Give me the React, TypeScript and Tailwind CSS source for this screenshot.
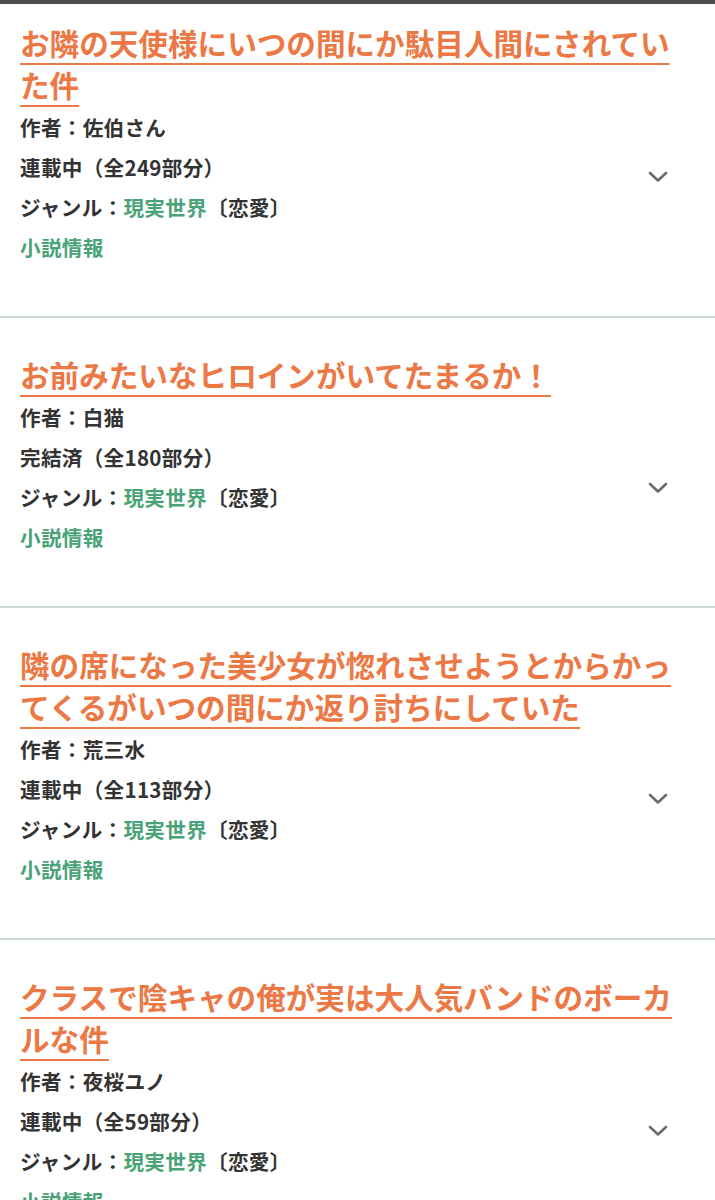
import React from 'react';

interface Novel {
  title: string;
  author: string;
  status: string;
}

const novels: Novel[] = [
  { title: 'お隣の天使様にいつの間にか駄目人間にされていた件', author: '佐伯さん', status: '連載中（全249部分）' },
  { title: 'お前みたいなヒロインがいてたまるか！', author: '白猫', status: '完結済（全180部分）' },
  { title: '隣の席になった美少女が惚れさせようとからかってくるがいつの間にか返り討ちにしていた', author: '荒三水', status: '連載中（全113部分）' },
  { title: 'クラスで陰キャの俺が実は大人気バンドのボーカルな件', author: '夜桜ユノ', status: '連載中（全59部分）' },
];

const Chevron = () => (
  <svg width="20" height="12" viewBox="0 0 20 12" fill="none">
    <polyline points="2,2 10,9.5 18,2" stroke="#6b6b6b" strokeWidth="2.6" strokeLinecap="round" strokeLinejoin="round" />
  </svg>
);

const NovelItem: React.FC<{ novel: Novel; first?: boolean }> = ({ novel, first }) => (
  <div className={`flex items-center pl-5 pb-[49px] ${first ? 'pt-[18px]' : 'pt-[36px] border-t-2 border-[#cbd8d8]'}`}>
    <div className="w-[675px] shrink-0">
      <a className="block text-[29.6px] leading-[42px] font-bold text-[#eb7845] underline decoration-2 underline-offset-[8px] pb-px">
        {novel.title}
      </a>
      <div className="text-[20.6px] leading-[40px] font-semibold text-[#333] tracking-[0.3px]">
        <p>作者：{novel.author}</p>
        <p>{novel.status}</p>
        <p>
          ジャンル：<span className="text-[#4aa378]">現実世界</span>〔恋愛〕
        </p>
        <p className="text-[#4aa378]">小説情報</p>
      </div>
    </div>
    <div className="ml-[-47px] w-5 shrink-0 mt-[64px] flex justify-center">
      <Chevron />
    </div>
  </div>
);

export default function App() {
  return (
    <div className="w-[715px] min-h-screen bg-white" style={{ fontFamily: '"Noto Sans CJK JP", "Noto Sans", sans-serif' }}>
      <div className="h-1 bg-[#4b4b4b]" />
      {novels.map((n, i) => (
        <NovelItem key={i} novel={n} first={i === 0} />
      ))}
    </div>
  );
}
